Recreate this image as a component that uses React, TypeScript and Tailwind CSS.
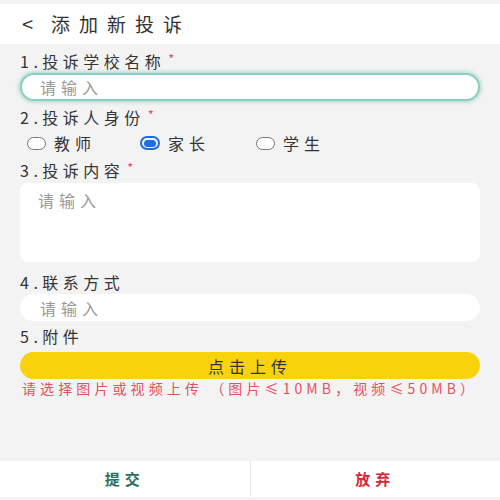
import React from "react";

const font = { fontFamily: '"Noto Sans CJK SC", "Noto Sans", sans-serif' };

function Label({ text, required }: { text: string; required?: boolean }) {
  return (
    <div className="flex items-center h-[22px] pl-[20px] text-[16px] tracking-[4.5px] text-[#333]">
      <span>{text}</span>
      {required && <span className="text-[#e5505f] text-[13px] ml-[3px] -mt-[4px]">*</span>}
    </div>
  );
}

function Radio({ label, checked }: { label: string; checked?: boolean }) {
  return (
    <div className="flex items-center gap-[8px]">
      <div
        className={
          checked
            ? "w-[20px] h-[14px] rounded-full border-2 border-[#1b6fe4] flex items-center justify-center"
            : "w-[19px] h-[13px] rounded-full border border-[#777] bg-white"
        }
      >
        {checked && <div className="w-[12px] h-[7px] rounded-full bg-[#1b6fe4]" />}
      </div>
      <span className="text-[16px] tracking-[5px] text-[#333]">{label}</span>
    </div>
  );
}

export default function App() {
  return (
    <div className="w-[500px] h-[500px] bg-[#f3f3f3] flex flex-col" style={font}>
      {/* Header */}
      <div className="mt-[4px] h-[40px] bg-white flex items-center">
        <span className="ml-[22px] text-[20px] text-[#333]">&lt;</span>
        <span className="ml-[18px] text-[19px] tracking-[9px] text-[#333]">添加新投诉</span>
      </div>

      <div className="mt-[6px]">
        <Label text="1.投诉学校名称" required />
      </div>
      <div className="mx-[20px] mt-[1px] h-[28px] rounded-full bg-white border-2 border-[#8ccfbf] shadow-[0_0_3px_2px_rgba(140,207,191,0.5)] flex items-center pl-[18px] text-[16px] tracking-[5px] text-[#999]">
        请输入
      </div>

      <div className="mt-[5px]">
        <Label text="2.投诉人身份" required />
      </div>
      <div className="h-[30px] flex items-center pl-[27px]">
        <Radio label="教师" />
        <div className="ml-[44px]">
          <Radio label="家长" checked />
        </div>
        <div className="ml-[46px]">
          <Radio label="学生" />
        </div>
      </div>

      <div className="mt-[1px]">
        <Label text="3.投诉内容" required />
      </div>
      <div className="mx-[20px] mt-[2px] h-[79px] rounded-[8px] bg-white pl-[18px] pt-[5px] text-[16px] tracking-[5px] text-[#999]">
        请输入
      </div>

      <div className="mt-[9px]">
        <Label text="4.联系方式" />
      </div>
      <div className="mx-[20px] mt-[1px] h-[27px] rounded-full bg-white flex items-center pl-[20px] text-[16px] tracking-[5px] text-[#999]">
        请输入
      </div>

      <div className="mt-[4px]">
        <Label text="5.附件" />
      </div>
      <div className="mx-[20px] mt-[5px] h-[27px] rounded-full bg-[#f8d30c] flex items-center justify-center text-[16px] tracking-[5px] text-[#333]">
        点击上传
      </div>
      <div className="pl-[22px] mt-[1px] leading-[16px] text-[14px] tracking-[4.1px] text-[#e5505f] whitespace-nowrap">
        请选择图片或视频上传 （图片≤10MB，视频≤50MB）
      </div>

      {/* Bottom bar */}
      <div className="mt-auto mb-[3px] h-[36px] bg-white flex">
        <div className="flex-1 flex items-center justify-center text-[15px] font-bold tracking-[5px] text-[#2b6e60]">
          提交
        </div>
        <div className="w-px bg-[#e8e8e8]" />
        <div className="flex-1 flex items-center justify-center text-[15px] font-bold tracking-[5px] text-[#d6263b]">
          放弃
        </div>
      </div>
    </div>
  );
}
